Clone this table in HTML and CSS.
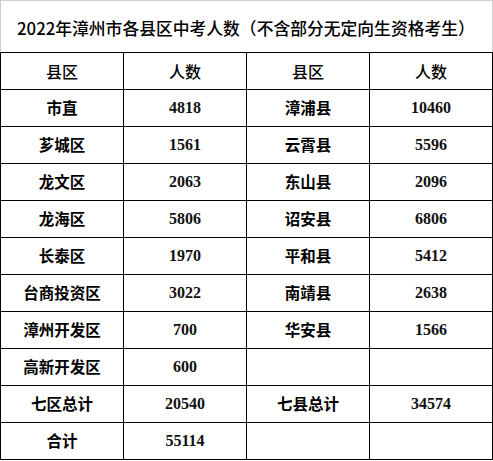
FILE: index.html
```html
<!DOCTYPE html>
<html lang="zh-CN">
<head>
<meta charset="utf-8">
<title>2022年漳州市各县区中考人数</title>
<link rel="stylesheet" href="styles.css">
</head>
<body>
<div class="sheet">
  <div class="title">2022年漳州市各县区中考人数（不含部分无定向生资格考生）</div>
  <table class="grid">
    <colgroup><col class="c"><col class="c"><col class="c"><col class="c"></colgroup>
    <tr class="head"><td>县区</td><td>人数</td><td>县区</td><td>人数</td></tr>
    <tr><td class="name">市直</td><td class="num">4818</td><td class="name">漳浦县</td><td class="num">10460</td></tr>
    <tr><td class="name">芗城区</td><td class="num">1561</td><td class="name">云霄县</td><td class="num">5596</td></tr>
    <tr><td class="name">龙文区</td><td class="num">2063</td><td class="name">东山县</td><td class="num">2096</td></tr>
    <tr><td class="name">龙海区</td><td class="num">5806</td><td class="name">诏安县</td><td class="num">6806</td></tr>
    <tr><td class="name">长泰区</td><td class="num">1970</td><td class="name">平和县</td><td class="num">5412</td></tr>
    <tr><td class="name">台商投资区</td><td class="num">3022</td><td class="name">南靖县</td><td class="num">2638</td></tr>
    <tr><td class="name">漳州开发区</td><td class="num">700</td><td class="name">华安县</td><td class="num">1566</td></tr>
    <tr><td class="name">高新开发区</td><td class="num">600</td><td></td><td></td></tr>
    <tr><td class="name">七区总计</td><td class="num">20540</td><td class="name">七县总计</td><td class="num">34574</td></tr>
    <tr><td class="name">合计</td><td class="num">55114</td><td></td><td></td></tr>
  </table>
</div>
</body>
</html>
```
FILE: styles.css
```css
html, body {
  margin: 0;
  padding: 0;
  background: #ffffff;
}
.sheet {
  width: 493px;
  height: 461px;
  overflow: hidden;
  font-family: "Noto Sans CJK SC", "Liberation Serif", sans-serif;
  color: #000;
}
.title {
  box-sizing: border-box;
  width: 493px;
  height: 52px;
  border: 1px solid #cfcfcf;
  border-bottom: none;
  display: flex;
  align-items: center;
  padding-left: 16px;
  padding-top: 2px;
  font-size: 16.8px;
  font-weight: 500;
  white-space: nowrap;
}
.grid {
  border-collapse: collapse;
  table-layout: fixed;
  width: 492px;
}
.grid .c {
  width: 123px;
}
.grid td {
  border: 1px solid #000;
  height: 36px;
  padding: 0;
  text-align: center;
  vertical-align: middle;
  line-height: 1;
}
.grid .head td {
  font-size: 16px;
  font-weight: 500;
}
.grid .name {
  font-size: 15.5px;
  font-weight: 700;
}
.grid .num {
  font-family: "Liberation Serif", serif;
  font-size: 16px;
  font-weight: 700;
  color: #111;
}
```
